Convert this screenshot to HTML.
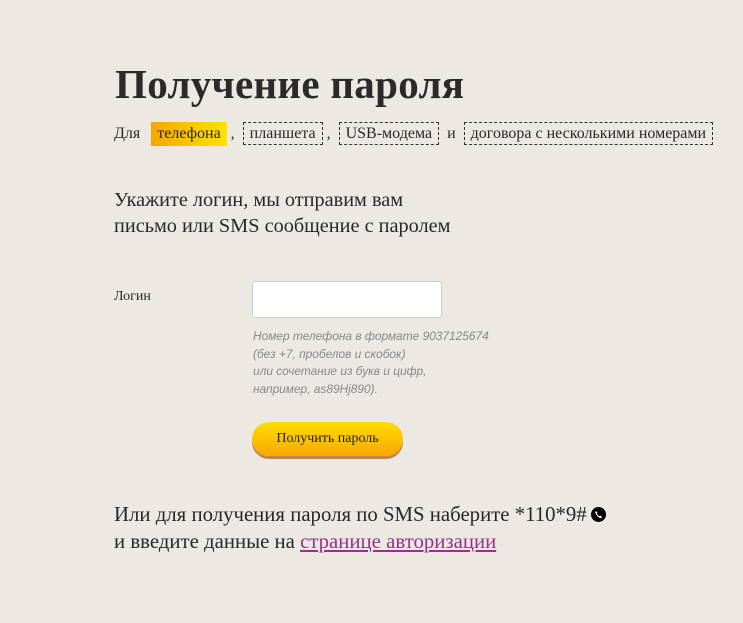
<!DOCTYPE html>
<html><head><meta charset="utf-8"><style>
body{margin:0;background:#ece9e2;width:743px;height:623px;overflow:hidden;font-family:"Liberation Serif","DejaVu Serif",serif;color:#282828;position:relative}
.a{position:absolute;white-space:nowrap}
h1{position:absolute;left:115px;top:60px;margin:0;font-size:41px;font-weight:bold;color:#2a2a2a;letter-spacing:0.3px}
.tabs{left:114px;top:122px;font-size:16px;line-height:24px}
.tabs span{display:inline-block;padding:0 6px;border:1px dashed #333;line-height:21px;margin:0 4px}
.tabs span.on{border:none;background:linear-gradient(90deg,#f7a600,#ffe200);line-height:24px;padding:0 6px;margin-left:7px}
.p{left:114px;top:187px;font-size:20.3px;line-height:26px}
.lab{left:114px;top:289px;font-size:14px}
.inp{position:absolute;left:252px;top:281px;width:188px;height:35px;background:#fff;border:1px solid #ccc;border-radius:3px}
.hint{left:253px;top:328px;font-family:"Liberation Sans",sans-serif;font-style:italic;font-size:11.9px;line-height:17.5px;color:#888}
.btn{position:absolute;left:252px;top:422px;width:151px;height:34px;border-radius:17px;background:linear-gradient(#ffdd00,#f7a800);box-shadow:0 3px 0 #c8834a;text-align:center;line-height:34px;font-size:14px;color:#222}
.b{left:114px;top:501px;font-size:20.8px;line-height:27px}
.b a{color:#9b2f8f;text-decoration:underline}
.ph{display:inline-block;width:15px;height:15px;border-radius:50%;background:#000;vertical-align:-1px;margin-left:4px;position:relative}
.ph svg{position:absolute;left:3px;top:3px}
</style></head><body>
<h1>Получение пароля</h1>
<div class="a tabs">Для <span class="on">телефона</span>, <span>планшета</span>, <span>USB-модема</span> и <span>договора с несколькими номерами</span></div>
<div class="a p">Укажите логин, мы отправим вам<br>письмо или SMS сообщение с паролем</div>
<div class="a lab">Логин</div>
<div class="inp"></div>
<div class="a hint">Номер телефона в формате 9037125674<br>(без +7, пробелов и скобок)<br>или сочетание из букв и цифр,<br>например, as89Hj890).</div>
<div class="btn">Получить пароль</div>
<div class="a b">Или для получения пароля по SMS наберите *110*9#<span class="ph"><svg width="9" height="9" viewBox="0 0 9 9"><path d="M2 1 L3.5 2.8 L2.8 3.6 Q4 5.6 5.4 6.2 L6.2 5.5 L8 7 L7 8.2 Q3.5 7.8 1 2.2 Z" fill="#fff"/></svg></span><br>и введите данные на <a>странице авторизации</a></div>
</body></html>
